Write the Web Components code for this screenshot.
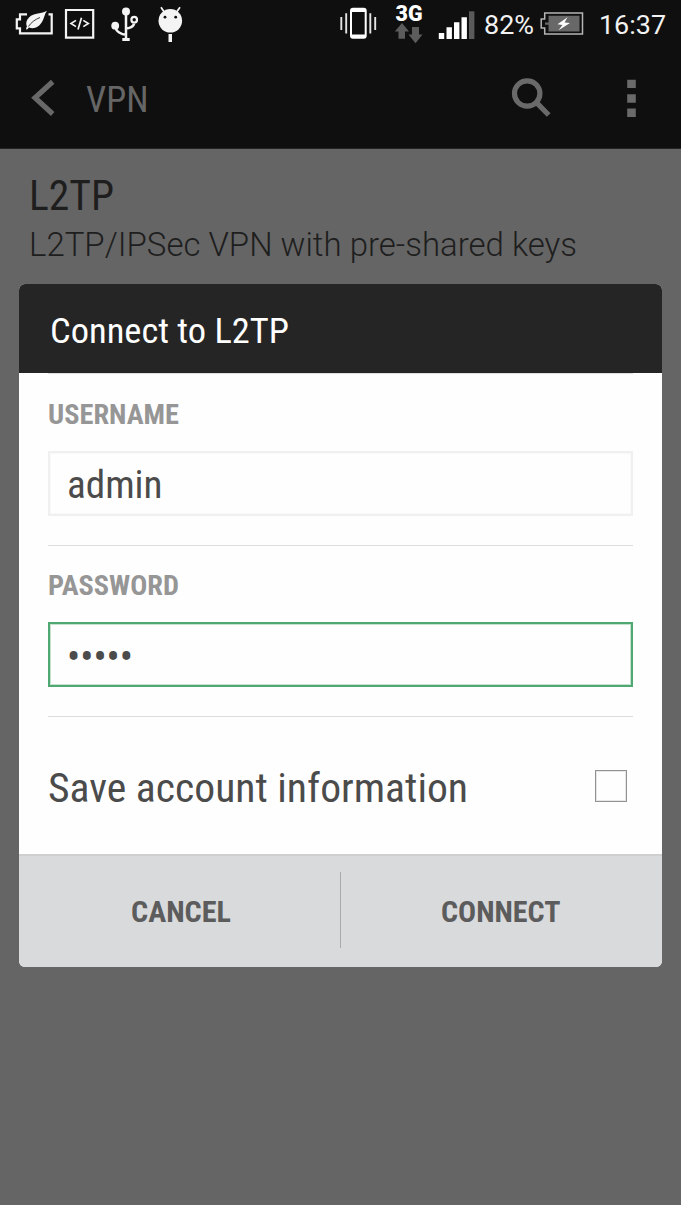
<!DOCTYPE html>
<html lang="en">
<head>
<meta charset="utf-8">
<title>VPN</title>
<style>
html,body{margin:0;background:#656565}
body{font-family:"Roboto Condensed",Roboto,"Liberation Sans",sans-serif}
</style>
</head>
<body>
<vpn-screen></vpn-screen>
<script>
const define = (name, html, ready) => {
  const t = document.createElement('template');
  t.innerHTML = html;
  customElements.define(name, class extends HTMLElement {
    connectedCallback() {
      if (this.shadowRoot) return;
      this.attachShadow({mode: 'open'}).append(t.content.cloneNode(true));
      if (ready) ready(this, this.shadowRoot);
    }
  });
};

// A single line of text whose advance is set by its w attribute.
define('fit-text', `<style>
:host{display:block;white-space:nowrap;font-stretch:75%}
span{display:inline-block;transform-origin:0 50%}
</style><span><slot></slot></span>`, (el, root) => {
  const w = parseFloat(el.getAttribute('w'));
  const s = root.querySelector('span');
  el.style.width = w + 'px';
  s.style.transform = 'scaleX(' + w / s.getBoundingClientRect().width + ')';
});

define('status-bar', `<style>
:host{display:flex;height:49px;background:#0f0f0f;color:#fff}
svg{display:block;height:49px;flex:none;fill:none}
fit-text{font:400 26px/51px Roboto,sans-serif;color:#f2f2f2}
</style>
<svg style="margin-left:14px" width="41" viewBox="14 0 41 49"><path d="M27 14.300H20V19.300H16.800V28.300H20V33.400H51.700V14.300H48.500" stroke="#f4f4f4" stroke-width="2.200"/><path d="M47 10.800C42 14 34 12.500 29 17.500C26 20.500 25.800 24 27 26.500C25.800 28 26 29.500 26.800 29.800L29 27.500C34 29.500 39 27 42 22C44.200 18.500 44.500 14 47 10.800Z" fill="#f4f4f4"/><path d="M28.500 26.500C31 22.500 35 19.500 40 17.500" stroke="#0f0f0f" stroke-width=".8"/></svg>
<svg style="margin-left:9px" width="32" viewBox="64 0 32 49"><path d="M66 10H93.200V37.700H66Z" stroke="#f4f4f4" stroke-width="2.200"/><path d="M76 20.400L71 23.500L76 26.600M83.300 20.400L88.300 23.500L83.300 26.600M81.500 17.800L78 29.500" stroke="#f4f4f4" stroke-width="1.700"/></svg>
<svg style="margin-left:14px" width="30" viewBox="110 0 30 49"><path d="M126 11V39M115.200 26C115.500 32 122 34.500 126 34.700M134 23.500C134 26.500 129 28.300 126 28.500" stroke="#f4f4f4" stroke-width="2.500"/><circle cx="126" cy="11.500" r="4" fill="#f4f4f4"/><circle cx="115.200" cy="25.700" r="3.900" fill="#f4f4f4"/><circle cx="134.200" cy="19.700" r="2.800" stroke="#f4f4f4" stroke-width="2.200"/><path d="M122.300 38H129.700V41H122.300Z" fill="#f4f4f4"/></svg>
<svg style="margin-left:17px" width="27" viewBox="157 0 27 49"><circle cx="170.300" cy="20.800" r="11.800" fill="#f4f4f4"/><path d="M161 7.300L164.500 12.500M180 7.300L176.300 12.500" stroke="#f4f4f4" stroke-width="1.800"/><circle cx="165" cy="17.200" r="1.400" fill="#0f0f0f"/><circle cx="175.700" cy="17.200" r="1.400" fill="#0f0f0f"/><path d="M168.500 34H172V42H168.500Z" fill="#f4f4f4"/></svg>
<svg style="margin-left:154px" width="42" viewBox="338 0 42 49"><path fill-rule="evenodd" fill="#fff" d="M353 7.700H363.700Q366.700 7.700 366.700 10.700V35.700Q366.700 38.700 363.700 38.700H353Q350 38.700 350 35.700V10.700Q350 7.700 353 7.700ZM352 12V34.500H364.700V12Z"/><path d="M346.200 13.200V33.500M341.300 17V30M370.300 13.200V33.500M375.200 17V30" stroke="#e4e4e4" stroke-width="1.900"/></svg>
<svg style="margin-left:14px" width="32" viewBox="394 0 32 49"><text x="395.500" y="21" textLength="27" lengthAdjust="spacingAndGlyphs" font-family="Roboto,sans-serif" font-weight="900" font-size="22" fill="#fff">3G</text><path d="M402 23L409 31.500H405V38.700H398.500V31.500H394.800ZM415.500 43.300L408.500 34.500H412V27H419V34.500H422.500Z" fill="#5c5c5c"/></svg>
<svg style="margin-left:11px" width="39" viewBox="437 0 39 49"><path d="M438.800 33H444.200V39H438.800ZM446.500 27.300H451.900V39H446.500ZM454 22.300H459.400V39H454ZM461.500 17.300H466.900V39H461.500Z" fill="#fff"/><path d="M469 11.300H474.400V39H469Z" fill="#5a5a5a"/></svg>
<fit-text w="50" style="margin-left:8px">82%</fit-text>
<svg style="margin-left:5px" width="46" viewBox="539 0 46 49"><path d="M544.700 13H582.500V34H544.700V28H541.200V19H544.700Z" stroke="#b5b5b5" stroke-width="1.500"/><path d="M548.500 15.800H579.500V31.500H548.500V24.800H545V22.500H548.500Z" fill="#686868"/><path d="M567.500 17.300L557.500 24.300L562.500 25L558.500 30.300L570 23L564.600 22.500Z" fill="#fff"/></svg>
<fit-text w="67" style="margin-left:14px">16:37</fit-text>`);

define('app-bar', `<style>
:host{display:flex;box-sizing:border-box;height:100px;background:#0f0f0f;border-bottom:1px solid #242424;color:#666}
svg{display:block;height:99px;fill:none}
fit-text{font-size:36.500px;line-height:101px;margin-left:28px}
.gap{flex:1}
</style>
<svg style="margin-left:28px" width="30" viewBox="28 49 30 99"><path d="M52.700 81.800L35 97.700L52.700 114" stroke="#686868" stroke-width="5.200"/></svg>
<fit-text w="62.500"><slot></slot></fit-text>
<div class="gap"></div>
<svg width="44" viewBox="509 49 44 99"><circle cx="527.200" cy="93.500" r="12.700" stroke="#6a6a6a" stroke-width="5.200"/><path d="M536.500 102.700L548.700 115" stroke="#6a6a6a" stroke-width="5.200"/></svg>
<svg style="margin-left:71px;margin-right:42px" width="15" viewBox="624 49 15 99"><path d="M627.200 79.700H635.800V88H627.200ZM627.200 94.200H635.800V102.700H627.200ZM627.200 108.500H635.800V117H627.200Z" fill="#6a6a6a"/></svg>`);

define('vpn-entry', `<style>
:host{display:block;padding:21px 0 0 29px;height:115px;box-sizing:border-box}
.name{font-size:42px;line-height:51px;color:#1e1e1e}
.info{font:300 33px/44px Roboto,sans-serif;color:#1e1e1e;margin-top:2px}
</style>
<fit-text class="name" w="85"><slot name="name"></slot></fit-text>
<fit-text class="info" w="548"><slot name="info"></slot></fit-text>`);

define('form-field', `<style>
:host{display:block;height:172px;box-sizing:border-box;border-top:1px solid #dcdcdc;color:#4b4b4b}
:host([focused]){height:171px}
.label{font-size:28px;font-weight:700;line-height:36px;padding-top:23px;color:#969696}
:host([focused]) .label{padding-top:22px}
.box{display:flex;align-items:center;box-sizing:border-box;height:65px;margin-top:18px;padding-left:17px;border:2px solid #f0f0f0;box-shadow:inset 0 0 0 1px #f9f9f9}
:host([focused]) .box{border-color:#4fa871;box-shadow:inset 0 0 0 1px #c4e2cf}
</style>
<fit-text class="label" w="131"><slot name="label"></slot></fit-text>
<div class="box"><slot></slot></div>`);

define('check-row', `<style>
:host{display:flex;align-items:center;height:137px;border-top:1px solid #dcdcdc;color:#4b4b4b}
fit-text{font-size:41px;line-height:50px;padding-top:5px}
i{box-sizing:border-box;width:32px;height:32px;margin:1px 6px 0 auto;border:1px solid #929292;box-shadow:inset 0 0 0 1px #e6e6e6}
</style>
<fit-text w="420"><slot></slot></fit-text><i></i>`);

define('dialog-button', `<style>
:host{display:flex;flex:1;justify-content:center;align-items:center;color:#5c5c5c;font-size:30px;font-weight:700;line-height:40px}
</style><slot></slot>`);

define('modal-dialog', `<style>
:host{display:flex;flex-direction:column;box-sizing:border-box;width:643px;height:683px;margin:0 0 0 19px;border-radius:6px;overflow:hidden;background:#fefefe}
header{height:89px;background:#252525;color:#fff;font-size:35.500px;line-height:95px;padding-left:31px}
main{height:481px;padding:0 29px;box-sizing:border-box}
footer{flex:1;display:flex;align-items:center;background:#d9dadc;border-top:2px solid #cfcfcf}
b{width:1px;height:76px;margin-bottom:4px;background:#aaabad}
</style>
<header><slot name="title"></slot></header>
<main><slot></slot></main>
<footer><slot name="left"></slot><b></b><slot name="right"></slot></footer>`);

define('vpn-screen', `<style>
:host{display:block;height:1205px;overflow:hidden;background:#656565}
.user{font-size:39px;line-height:50px;padding-top:2px}
.dots{font-size:43px;line-height:50px;padding-top:3px}
.l{padding-left:2px}
.r{padding-right:2px}
</style>
<status-bar></status-bar>
<app-bar>VPN</app-bar>
<vpn-entry><span slot="name">L2TP</span><span slot="info">L2TP/IPSec VPN with pre-shared keys</span></vpn-entry>
<div style="height:20px"></div>
<modal-dialog>
<fit-text slot="title" w="239">Connect to L2TP</fit-text>
<form-field><span slot="label">USERNAME</span><fit-text class="user" w="95.500">admin</fit-text></form-field>
<form-field focused><span slot="label">PASSWORD</span><fit-text class="dots" w="66">•••••</fit-text></form-field>
<check-row>Save account information</check-row>
<dialog-button slot="left"><fit-text class="l" w="100">CANCEL</fit-text></dialog-button>
<dialog-button slot="right"><fit-text class="r" w="119.500">CONNECT</fit-text></dialog-button>
</modal-dialog>`);
</script>
</body>
</html>
